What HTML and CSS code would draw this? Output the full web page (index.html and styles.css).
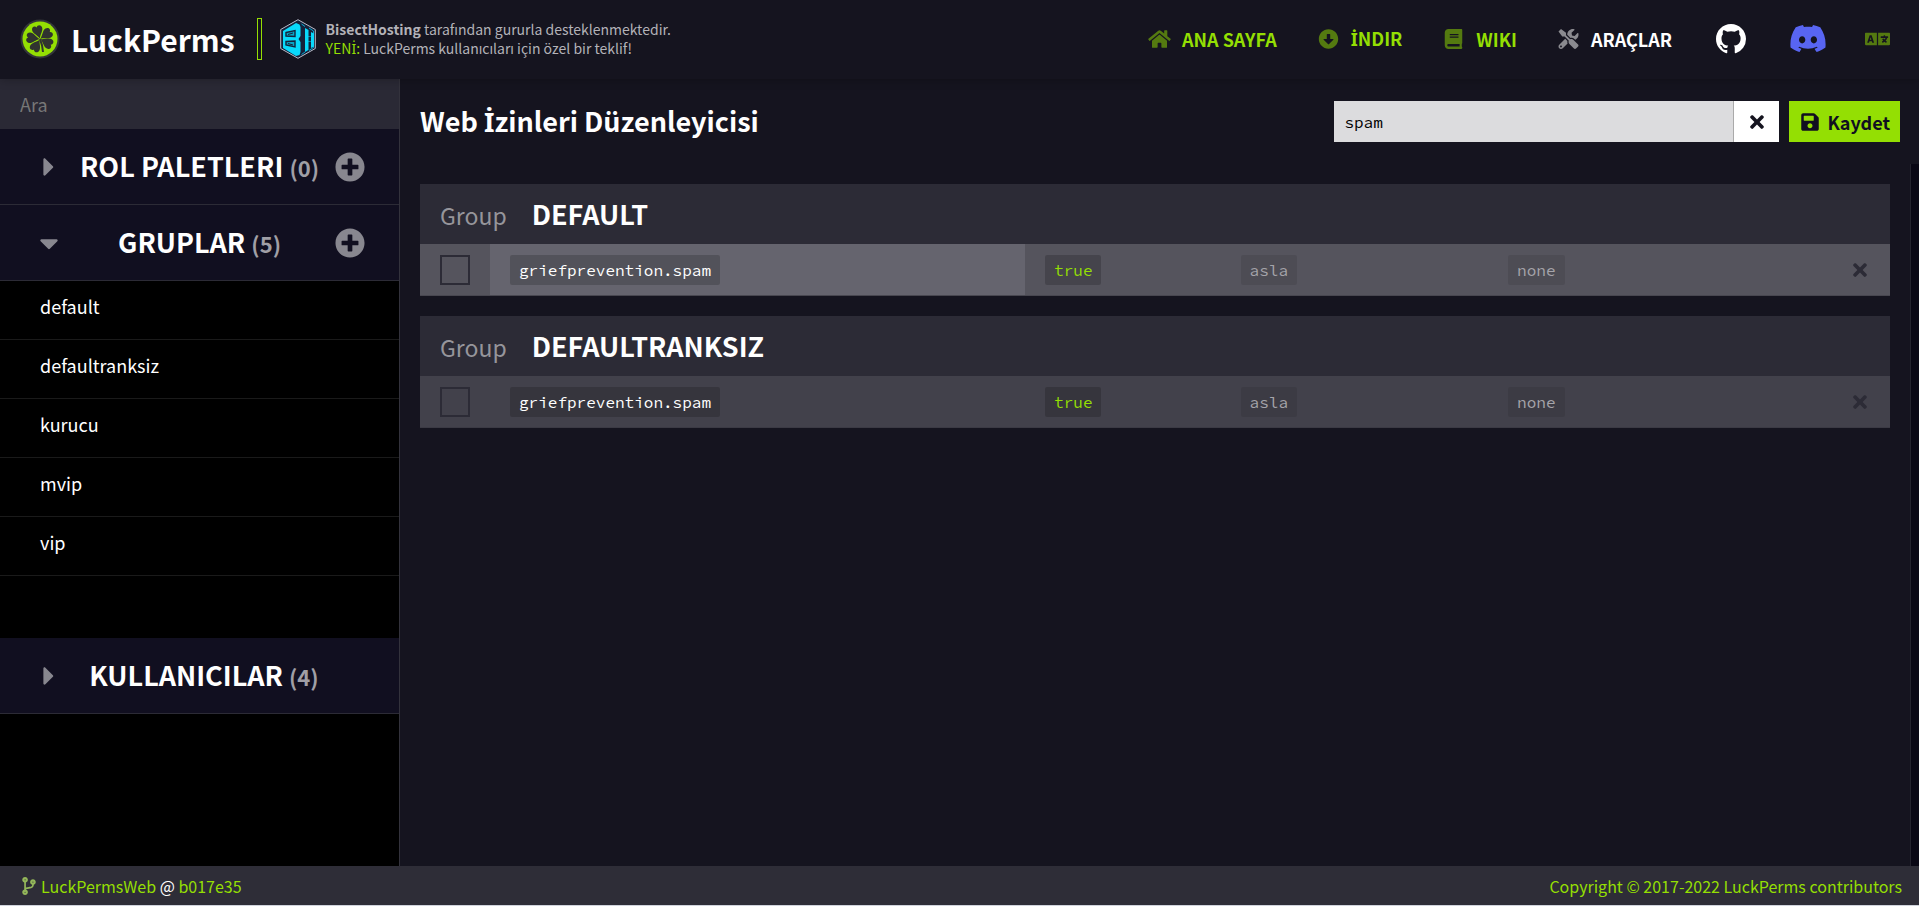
FILE: index.html
```html
<!DOCTYPE html>
<html lang="tr">
<head>
<meta charset="utf-8">
<title>LuckPerms</title>
<link rel="stylesheet" href="styles.css">
</head>
<body>
<svg class="sprite" aria-hidden="true">
  <symbol id="times" viewBox="0 0 352 512"><path d="M242.72 256l100.07-100.07c12.28-12.28 12.28-32.19 0-44.48l-22.24-22.24c-12.28-12.28-32.19-12.28-44.48 0L176 189.28 75.93 89.21c-12.28-12.28-32.19-12.28-44.48 0L9.21 111.45c-12.28 12.28-12.28 32.19 0 44.48L109.28 256 9.21 356.07c-12.28 12.28-12.28 32.19 0 44.48l22.24 22.24c12.28 12.28 32.2 12.28 44.48 0L176 322.72l100.07 100.07c12.28 12.28 32.2 12.28 44.48 0l22.24-22.24c12.28-12.28 12.28-32.19 0-44.48L242.72 256z"/></symbol>
  <symbol id="plus" viewBox="0 0 512 512"><path d="M256 8C119 8 8 119 8 256s111 248 248 248 248-111 248-248S393 8 256 8zm144 276c0 6.6-5.4 12-12 12h-92v92c0 6.6-5.4 12-12 12h-56c-6.6 0-12-5.4-12-12v-92h-92c-6.6 0-12-5.4-12-12v-56c0-6.6 5.4-12 12-12h92v-92c0-6.6 5.4-12 12-12h56c6.6 0 12 5.4 12 12v92h92c6.6 0 12 5.4 12 12v56z"/></symbol>
  <symbol id="caret-right" viewBox="0 0 192 512"><path d="M0 384.662V127.338c0-17.818 21.543-26.741 34.142-14.142l128.662 128.662c7.81 7.81 7.81 20.474 0 28.284L34.142 398.804C21.543 411.404 0 402.48 0 384.662z"/></symbol>
  <symbol id="caret-down" viewBox="0 0 320 512"><path d="M31.3 192h257.3c17.8 0 26.7 21.5 14.1 34.1L174.1 354.8c-7.8 7.8-20.5 7.8-28.3 0L17.2 226.1C4.6 213.5 13.5 192 31.3 192z"/></symbol>
</svg>

<header class="header">
  <a class="brand" href="#">
    <svg class="brand-logo" viewBox="0 0 40 40" aria-hidden="true">
      <circle cx="20" cy="20" r="19.500" fill="#33363a"/>
      <circle cx="20" cy="20" r="17.5" fill="#94df03"/>
      <g fill="#30332f">
        <path id="leaf" d="M20 19.500C18.500 15.500 14.600 13 14.800 9.500C15 6 18.800 5.400 20 8C21.200 5.400 25 6 25.200 9.500C25.400 13 21.500 15.500 20 19.500z" transform="rotate(-16 20 20)"/>
        <use href="#leaf" transform="rotate(70 20 20)"/>
        <use href="#leaf" transform="rotate(134 20 20)"/>
        <use href="#leaf" transform="rotate(226 20 20)"/>
        <use href="#leaf" transform="rotate(293 20 20)"/>
      </g>
      <path d="M20 20Q22.500 26 23 33" fill="none" stroke="#30332f" stroke-width="2"/>
    </svg>
    <span class="brand-name">LuckPerms</span>
  </a>
  <a class="sponsor" href="#">
    <svg class="sponsor-logo" viewBox="0 0 36 40" aria-hidden="true">
      <path d="M18 .7L35.300 10.500V29.500L18 39.300.7 29.500V10.500z" fill="#15213a" stroke="#b9bcc8"/>
      <path d="M3 12L16 4L19.500 5.500L20.500 8V17L18.500 20L20.500 23V33L19.500 36L16 37L3 29z" fill="#08d9fb"/>
      <path d="M21.500 5L25 7.500M21.500 35.500L25 33M29 9L33.500 12V28.500L29 31.500" fill="none" stroke="#08a9cf"/>
      <path d="M25 9L28.500 11V17.500H31V13L34 14.500V27.500L31 29V23H28.500V31L25 33z" fill="#08d9fb"/>
      <path d="M28.500 18H31V22.500H28.500z" fill="#15213a"/>
      <path d="M6 13.500L15 11.500V17.500L6 17zM6 22.500L15 22V28L6 26z" fill="#07a5c5" stroke="#15213a" stroke-width="1.400"/>
      <path d="M8 15.500L13 14M8 24.500L13 26" stroke="#15213a"/>
    </svg>
    <span class="sponsor-text"><span><strong>BisectHosting</strong> tarafından gururla desteklenmektedir.</span><span><em>YEN<span class="dotted">İ</span>:</em> LuckPerms kullanıcıları için özel bir teklif!</span></span>
  </a>
  <nav class="nav">
    <a class="nav-link" href="#"><svg class="nav-icon" viewBox="0 0 576 512" aria-hidden="true"><path d="M280.37 148.26L96 300.11V464a16 16 0 0 0 16 16l112.06-.29a16 16 0 0 0 15.920-16V368a16 16 0 0 1 16-16h64a16 16 0 0 1 16 16v95.640a16 16 0 0 0 16 16.050L464 480a16 16 0 0 0 16-16V300L295.670 148.260a12.190 12.190 0 0 0-15.300 0zM571.600 251.470L488 182.560V44.050a12 12 0 0 0-12-12h-56a12 12 0 0 0-12 12v72.610L318.470 43a48 48 0 0 0-61 0L4.340 251.470a12 12 0 0 0-1.600 16.900l25.500 31A12 12 0 0 0 45.150 301l235.220-193.740a12.190 12.190 0 0 1 15.300 0L530.900 301a12 12 0 0 0 16.900-1.600l25.500-31a12 12 0 0 0-1.700-16.930z"/></svg>ANA SAYFA</a>
    <a class="nav-link" href="#"><svg class="nav-icon" viewBox="0 0 512 512" aria-hidden="true"><path d="M504 256c0 137-111 248-248 248S8 393 8 256 119 8 256 8s248 111 248 248zM212 140v116h-70.900c-10.700 0-16.100 13-8.500 20.500l114.900 114.300c4.700 4.700 12.200 4.700 16.900 0l114.900-114.300c7.600-7.600 2.200-20.500-8.500-20.500H300V140c0-6.600-5.400-12-12-12h-64c-6.600 0-12 5.400-12 12z"/></svg><span><span class="dotted">İ</span>NDIR</span></a>
    <a class="nav-link" href="#"><svg class="nav-icon" viewBox="0 0 448 512" aria-hidden="true"><path d="M448 360V24c0-13.300-10.700-24-24-24H96C43 0 0 43 0 96v320c0 53 43 96 96 96h328c13.300 0 24-10.700 24-24v-16c0-7.500-3.500-14.300-8.900-18.700-4.200-15.400-4.200-59.300 0-74.700 5.400-4.300 8.900-11.100 8.900-18.600zM128 134c0-3.300 2.700-6 6-6h212c3.300 0 6 2.700 6 6v20c0 3.300-2.700 6-6 6H134c-3.300 0-6-2.700-6-6v-20zm0 64c0-3.300 2.700-6 6-6h212c3.300 0 6 2.700 6 6v20c0 3.300-2.700 6-6 6H134c-3.300 0-6-2.700-6-6v-20zm253.400 250H96c-17.700 0-32-14.300-32-32 0-17.600 14.400-32 32-32h285.400c-1.900 17.100-1.900 46.900 0 64z"/></svg>WIKI</a>
    <a class="nav-link nav-link-white" href="#"><svg class="nav-icon" viewBox="0 0 512 512" aria-hidden="true"><path d="M501.100 395.700L384 278.600c-23.100-23.100-57.600-27.600-85.400-13.900L192 158.100V96L64 0 0 64l96 128h62.100l106.600 106.600c-13.600 27.800-9.200 62.300 13.900 85.400l117.100 117.100c14.600 14.600 38.200 14.600 52.700 0l52.700-52.700c14.500-14.600 14.500-38.200 0-52.700zM331.700 225c28.300 0 54.900 11 74.900 31l19.400 19.400c15.800-6.900 30.800-16.500 43.800-29.500 37.100-37.100 49.700-89.300 37.900-136.700-2.200-9-13.500-12.100-20.100-5.500l-74.400 74.400-67.900-11.300L334 98.900l74.400-74.400c6.600-6.600 3.400-17.900-5.700-20.200-47.400-11.700-99.600.9-136.600 37.900-28.500 28.500-41.900 66.100-41.200 103.600l82.100 82.100c8.100-1.900 16.500-2.900 24.700-2.900zm-103.900 82l-56.700-56.700L18.700 402.800c-25 25-25 65.500 0 90.500s65.500 25 90.500 0l123.600-123.600c-7.600-19.900-9.900-41.600-5-62.700zM64 472c-13.200 0-24-10.800-24-24 0-13.300 10.700-24 24-24s24 10.700 24 24c0 13.200-10.700 24-24 24z"/></svg>ARAÇLAR</a>
    <a class="nav-github" href="#" aria-label="GitHub"><svg viewBox="0 0 16 16" aria-hidden="true"><path d="M8 0C3.580 0 0 3.580 0 8c0 3.540 2.290 6.530 5.470 7.590.4.07.55-.17.55-.38 0-.19-.01-.82-.01-1.490-2.010.37-2.530-.49-2.690-.94-.09-.23-.48-.94-.82-1.130-.28-.15-.68-.52-.01-.53.63-.01 1.080.58 1.230.82.72 1.210 1.870.87 2.330.66.07-.52.28-.87.51-1.070-1.780-.2-3.640-.89-3.640-3.950 0-.87.31-1.590.82-2.150-.08-.2-.36-1.020.08-2.120 0 0 .67-.21 2.200.82.64-.18 1.320-.27 2-.27.68 0 1.360.09 2 .27 1.530-1.040 2.200-.82 2.200-.82.44 1.100.16 1.920.08 2.120.51.56.82 1.270.82 2.150 0 3.070-1.870 3.750-3.650 3.950.29.25.54.73.54 1.480 0 1.070-.01 1.930-.01 2.200 0 .21.15.46.55.38A8.013 8.013 0 0016 8c0-4.420-3.580-8-8-8z"/></svg></a>
    <a class="nav-discord" href="#" aria-label="Discord"><svg viewBox="0 2.800 24 18.400" aria-hidden="true"><path d="M20.317 4.3698a19.7913 19.7913 0 00-4.8851-1.5152.0741.0741 0 00-.0785.0371c-.211.3753-.4447.8648-.6083 1.2495-1.8447-.2762-3.68-.2762-5.4868 0-.1636-.3933-.4058-.8742-.6177-1.2495a.077.077 0 00-.0785-.037 19.7363 19.7363 0 00-4.8852 1.515.0699.0699 0 00-.0321.0277C.5334 9.0458-.319 13.5799.0992 18.0578a.0824.0824 0 00.0312.0561c2.0528 1.5076 4.0413 2.4228 5.9929 3.0294a.0777.0777 0 00.0842-.0276c.4616-.6304.8731-1.2952 1.226-1.9942a.076.076 0 00-.0416-.1057c-.6528-.2476-1.2743-.5495-1.8722-.8923a.077.077 0 01-.0076-.1277c.1258-.0943.2517-.1923.3718-.2914a.0743.0743 0 01.0776-.0105c3.9278 1.7933 8.18 1.7933 12.0614 0a.0739.0739 0 01.0785.0095c.1202.099.246.1981.3728.2924a.077.077 0 01-.0066.1276 12.2986 12.2986 0 01-1.873.8914.0766.0766 0 00-.0407.1067c.3604.698.7719 1.3628 1.225 1.9932a.076.076 0 00.0842.0286c1.961-.6067 3.9495-1.5219 6.0023-3.0294a.077.077 0 00.0313-.0552c.5004-5.177-.8382-9.6739-3.5485-13.6604a.061.061 0 00-.0312-.0286zM8.02 15.3312c-1.1825 0-2.1569-1.0857-2.1569-2.419 0-1.3332.9555-2.4189 2.157-2.4189 1.2108 0 2.1757 1.0952 2.1568 2.419 0 1.3332-.9555 2.4189-2.1569 2.4189zm7.9748 0c-1.1825 0-2.1569-1.0857-2.1569-2.419 0-1.3332.9554-2.4189 2.1569-2.4189 1.2108 0 2.1757 1.0952 2.1568 2.419 0 1.3332-.946 2.4189-2.1568 2.4189Z"/></svg></a>
    <button class="nav-language" type="button" aria-label="Dil"><svg viewBox="0 0 640 512" aria-hidden="true"><path d="M152.100 236.200c-3.500-12.100-7.800-33.200-7.800-33.200h-.5s-4.300 21.100-7.800 33.200l-11.100 37.500H163zM616 96H336v320h280c13.300 0 24-10.700 24-24V120c0-13.300-10.700-24-24-24zm-24 120c0 6.600-5.400 12-12 12h-11.400c-6.900 23.600-21.700 47.400-42.700 69.900 8.400 6.400 17.100 12.500 26.100 18 5.500 3.400 7.300 10.500 4.100 16.200l-7.900 13.900c-3.400 5.900-10.900 7.800-16.700 4.300-12.600-7.800-24.500-16.100-35.400-24.900-10.900 8.700-22.700 17.100-35.400 24.900-5.800 3.500-13.300 1.600-16.700-4.300l-7.900-13.900c-3.200-5.600-1.400-12.800 4.200-16.200 9.300-5.700 18-11.700 26.100-18-7.900-8.400-14.900-17-21-25.700-4-5.700-2.200-13.600 3.700-17.100l6.500-3.900 7.300-4.300c5.400-3.200 12.400-1.700 16 3.400 5 7 10.800 14 17.400 20.900 13.500-14.200 23.800-28.900 30-43.200H412c-6.600 0-12-5.400-12-12v-16c0-6.600 5.400-12 12-12h64v-16c0-6.600 5.400-12 12-12h16c6.600 0 12 5.400 12 12v16h64c6.600 0 12 5.400 12 12zM0 120v272c0 13.300 10.700 24 24 24h280V96H24c-13.300 0-24 10.700-24 24zm58.900 216.100L116.400 167c1.700-4.900 6.200-8.100 11.400-8.100h32.500c5.100 0 9.700 3.300 11.400 8.100l57.500 169.100c2.600 7.800-3.100 15.900-11.400 15.900h-22.900a12 12 0 0 1-11.500-8.600l-9.400-31.900h-60.200l-9.100 31.800c-1.500 5.100-6.200 8.700-11.500 8.700H70.300c-8.200 0-14-8.100-11.400-15.900z"/></svg></button>
  </nav>
</header>

<div class="editor">
  <aside class="sidebar">
    <input class="sidebar-search" type="search" placeholder="Ara" aria-label="Ara">
    <section>
      <div class="section-head">
        <button class="toggle" type="button" aria-label="Genişlet"><svg class="caret" aria-hidden="true"><use href="#caret-right"/></svg></button>
        <h2>ROL PALETLERI <small>(0)</small></h2>
        <button class="add" type="button" aria-label="Ekle"><svg aria-hidden="true"><use href="#plus"/></svg></button>
      </div>
    </section>
    <section>
      <div class="section-head">
        <button class="toggle" type="button" aria-label="Daralt"><svg class="caret" aria-hidden="true"><use href="#caret-down"/></svg></button>
        <h2>GRUPLAR <small>(5)</small></h2>
        <button class="add" type="button" aria-label="Ekle"><svg aria-hidden="true"><use href="#plus"/></svg></button>
      </div>
      <ul class="groups">
        <li><a href="#">default</a></li>
        <li><a href="#">defaultranksiz</a></li>
        <li><a href="#">kurucu</a></li>
        <li><a href="#">mvip</a></li>
        <li><a href="#">vip</a></li>
      </ul>
    </section>
    <section>
      <div class="section-head section-head-plain">
        <button class="toggle" type="button" aria-label="Genişlet"><svg class="caret" aria-hidden="true"><use href="#caret-right"/></svg></button>
        <h2>KULLANICILAR <small>(4)</small></h2>
      </div>
    </section>
  </aside>

  <main class="main">
    <div class="toolbar">
      <h1>Web <span class="dotted">İ</span>zinleri Düzenleyicisi</h1>
      <div class="filter">
        <input type="text" value="spam" aria-label="Filtre">
        <button type="button" aria-label="Temizle"><svg aria-hidden="true"><use href="#times"/></svg></button>
      </div>
      <button class="save" type="button"><svg viewBox="0 0 448 512" aria-hidden="true"><path d="M433.941 129.941l-83.882-83.882A48 48 0 0 0 316.118 32H48C21.490 32 0 53.490 0 80v352c0 26.510 21.490 48 48 48h352c26.510 0 48-21.490 48-48V163.882a48 48 0 0 0-14.059-33.941zM224 416c-35.346 0-64-28.654-64-64 0-35.346 28.654-64 64-64s64 28.654 64 64c0 35.346-28.654 64-64 64zm96-304.520V212c0 6.627-5.373 12-12 12H76c-6.627 0-12-5.373-12-12V108c0-6.627 5.373-12 12-12h228.520c3.183 0 6.235 1.264 8.485 3.515l3.480 3.480A11.996 11.996 0 0 1 320 111.480z"/></svg>Kaydet</button>
    </div>
    <div class="results">
      <section class="result">
        <h2><span>Group</span>DEFAULT</h2>
        <table>
          <colgroup><col class="col-check"><col class="col-node"><col class="col-value"><col class="col-expiry"><col><col class="col-delete"></colgroup>
          <tr class="hovered">
            <td><input type="checkbox" aria-label="griefprevention.spam"></td>
            <td class="active"><code class="node">griefprevention.spam</code></td>
            <td><code class="true">true</code></td>
            <td><code class="dim">asla</code></td>
            <td><code class="dim">none</code></td>
            <td class="delete"><button type="button" aria-label="Sil"><svg aria-hidden="true"><use href="#times"/></svg></button></td>
          </tr>
        </table>
      </section>
      <section class="result">
        <h2><span>Group</span>DEFAULTRANKSIZ</h2>
        <table>
          <colgroup><col class="col-check"><col class="col-node"><col class="col-value"><col class="col-expiry"><col><col class="col-delete"></colgroup>
          <tr>
            <td><input type="checkbox" aria-label="griefprevention.spam"></td>
            <td><code class="node">griefprevention.spam</code></td>
            <td><code class="true">true</code></td>
            <td><code class="dim">asla</code></td>
            <td><code class="dim">none</code></td>
            <td class="delete"><button type="button" aria-label="Sil"><svg aria-hidden="true"><use href="#times"/></svg></button></td>
          </tr>
        </table>
      </section>
    </div>
  </main>
</div>

<footer class="footer">
  <div class="version"><svg viewBox="0 0 384 512" aria-hidden="true"><path d="M384 144c0-44.200-35.800-80-80-80s-80 35.800-80 80c0 36.400 24.300 67.100 57.500 76.800-.6 16.100-4.200 28.500-11 36.900-15.400 19.200-49.300 22.400-85.200 25.700-28.200 2.600-57.400 5.400-81.300 16.900v-144c32.500-10.200 56-40.500 56-76.300 0-44.200-35.800-80-80-80S0 35.800 0 80c0 35.800 23.500 66.100 56 76.300v199.300C23.500 365.900 0 396.200 0 432c0 44.200 35.800 80 80 80s80-35.800 80-80c0-34-21.200-63.100-51.200-74.600 3.100-5.200 7.800-9.800 14.900-13.400 16.200-8.200 40.400-10.400 66.100-12.800 42.200-3.900 90-8.400 118.200-43.400 14-17.400 21.100-39.800 21.600-67.900 31.600-10.800 54.400-40.700 54.400-75.900zM80 64c8.800 0 16 7.200 16 16s-7.200 16-16 16-16-7.200-16-16 7.200-16 16-16zm0 384c-8.800 0-16-7.200-16-16s7.200-16 16-16 16 7.200 16 16-7.200 16-16 16zm224-320c8.800 0 16 7.200 16 16s-7.200 16-16 16-16-7.200-16-16 7.200-16 16-16z"/></svg><span><a href="#">LuckPermsWeb</a> @ <a href="#">b017e35</a></span></div>
  <a href="#">Copyright © 2017-2022 LuckPerms contributors</a>
</footer>
</body>
</html>
```

FILE: styles.css
```css
:root {
  --green: #94df03;
  --bg: #15141f;
  --panel: #2c2b36;
  --sans: "Source Sans Pro", "Noto Sans CJK SC", "Noto Sans", sans-serif;
  --mono: "Source Code Pro", "Liberation Mono", monospace;
}

* { box-sizing: border-box; }

body {
  margin: 0;
  height: 100vh;
  display: flex;
  flex-direction: column;
  background: var(--bg);
  color: #fff;
  font-family: var(--sans);
  font-size: 18px;
  line-height: 24px;
}

a { color: inherit; text-decoration: none; }
button { border: 0; padding: 0; background: none; color: inherit; font: inherit; display: flex; align-items: center; justify-content: center; }
svg { display: block; fill: currentColor; flex: none; }
h1, h2 { margin: 0; font-weight: 700; font-size: 27px; line-height: 36px; }
.sprite { position: absolute; width: 0; height: 0; }
/* The main face has no dotted capital I */
.dotted { font-family: "Noto Sans", sans-serif; }

/* Header */
.header {
  position: relative;
  flex: none;
  height: 79px;
  padding: 0 29px 2px 20px;
  display: flex;
  align-items: center;
  background: var(--bg);
  box-shadow: 0 0 10px rgba(0, 0, 0, .3);
}
.brand { display: flex; align-items: center; gap: 11px; padding-right: 22px; }
.brand-logo { width: 40px; height: 40px; }
.brand-name { font-size: 30px; line-height: 40px; font-weight: 700; }
.sponsor { display: flex; align-items: center; gap: 10px; color: #b3b2b8; font-size: 14px; line-height: 19px; }
.sponsor::before { content: ""; width: 3px; height: 40px; margin-right: 8px; border: 1px solid var(--green); }
.sponsor-logo { width: 36px; height: 40px; }
.sponsor-text { display: flex; flex-direction: column; }
.sponsor em { color: var(--green); font-style: normal; }
.nav { margin-left: auto; display: flex; align-items: center; gap: 39px; color: var(--green); font-weight: 700; }
.nav-link { display: flex; align-items: center; gap: 10px; }
.nav-link-white { color: #fff; }
.nav-icon { width: 25px; height: 20px; opacity: .5; }
.nav-github { color: #fff; padding: 0 5px; }
.nav-github svg { width: 30px; height: 30px; }
.nav-discord { color: #5865f2; }
.nav-discord svg { width: 36px; height: 27px; }
.nav-language svg { width: 25px; height: 20px; opacity: .5; }

/* Sidebar */
.editor { flex: 1; min-height: 0; display: flex; }
.sidebar { flex: none; width: 400px; background: #000; border-right: 1px solid #33323c; }
.sidebar-search { display: block; width: 100%; height: 50px; padding: 0 20px; border: 0; background: #2a2935; color: #fff; font: inherit; }
.sidebar-search::placeholder { color: #777; }
.section-head { height: 76px; padding: 0 34px; display: flex; align-items: center; background: #110f20; border-bottom: 1px solid #2c2b36; }
.section-head-plain { padding-right: 55px; }
.section-head h2 { flex: 1; text-align: center; white-space: nowrap; }
.section-head small { font-size: 22px; color: #a09fa6; }
.toggle { width: 30px; height: 30px; color: #88878f; }
.caret { width: 30px; height: 30px; }
.add { width: 30px; height: 30px; color: #88878f; }
.add svg { width: 30px; height: 30px; }
.groups { list-style: none; margin: 0 0 62px; padding: 0; }
.groups a { display: block; height: 59px; padding: 13px 40px; border-bottom: 1px solid #1a1a1a; }

/* Main */
.main { flex: 1; min-width: 0; display: flex; flex-direction: column; }
.toolbar { display: flex; align-items: center; padding: 22px 19px 22px 20px; }
.toolbar h1 { margin-right: auto; }
.filter { display: flex; margin-right: 10px; }
.filter input { width: 400px; height: 41px; padding: 0 10px; border: 0; border-right: 1px solid #aaa; background: #dcdcde; color: #000; font: 16px/24px var(--mono); }
.filter button { width: 45px; background: #fff; color: var(--bg); }
.filter svg { width: 14px; height: 20px; }
.save { height: 41px; padding: 0 10px 0 12px; gap: 8px; background: var(--green); color: #110f20; font-weight: 700; }
.save svg { width: 18px; height: 20px; }
.results { flex: 1; padding: 20px 21px 0 20px; border-right: 8px solid #090714; box-shadow: inset -1px 0 #24232e; }
.result { margin-bottom: 20px; }
.result h2 { height: 60px; padding: 12px 20px; display: flex; align-items: baseline; gap: 25px; background: var(--panel); }
.result h2 span { font-size: 23px; font-weight: 400; color: #96959b; }
table { width: 100%; border-collapse: separate; border-spacing: 0; table-layout: fixed; background: #42414b; }
.hovered { background: #55545d; }
.hovered .active { background: #65646e; }
td { height: 52px; padding: 0 20px; vertical-align: middle; border-bottom: 1px solid #3b3a44; }
.hovered td { border-color: #484750; }
.col-check { width: 70px; }
.col-node { width: 36.4%; }
.col-value { width: 13.3%; }
.col-expiry { width: 18.2%; }
.col-delete { width: 60px; }
input[type="checkbox"] { appearance: none; display: block; width: 30px; height: 30px; margin: 0; border: 2px solid var(--panel); }
code { display: inline-block; vertical-align: middle; height: 30px; padding: 0 9px; border-radius: 2px; background: rgba(0, 0, 0, .18); font: 16px/30px var(--mono); }
.true { color: var(--green); }
.dim { color: #a5a4aa; background: rgba(0, 0, 0, .09); }
.delete button { width: 20px; color: var(--panel); }
.delete svg { width: 14px; height: 20px; }

/* Footer */
.footer { flex: none; height: 40px; padding: 0 17px 0 22px; display: flex; align-items: center; justify-content: space-between; background: #2e2d37; border-bottom: 1px solid #d0d3dc; font-size: 16px; }
.footer a { color: var(--green); }
.version { display: flex; align-items: center; gap: 5px; }
.version svg { width: 14px; height: 18px; color: #94b75a; }
```
